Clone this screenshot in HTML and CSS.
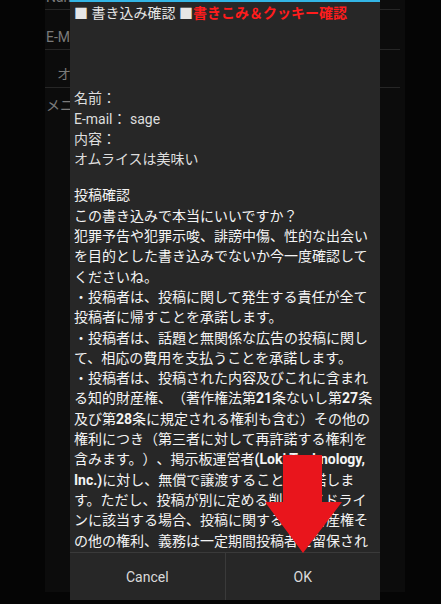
FILE: index.html
```html
<!DOCTYPE html>
<html lang="ja">
<head>
    <meta charset="UTF-8">
    <meta name="viewport" content="width=device-width, initial-scale=1.0">
    <title>書き込み確認</title>
    <link rel="stylesheet" href="styles.css">
</head>
<body>
    <div class="app">
        <div class="field field-name">Name</div>
        <div class="field field-mail">E-Mail</div>
        <div class="field field-input">オムライスは美味い</div>
        <div class="menu-label">メニュー</div>
    </div>

    <div class="dialog">
        <div class="dialog-body">
            <p class="title-line">■ 書き込み確認 ■<span class="warn">書きこみ＆クッキー確認</span></p>

            <div class="summary">
                <div>名前：</div>
                <div>E-mail： sage</div>
                <div>内容：</div>
                <div>オムライスは美味い</div>
            </div>

            <div class="notice">
                <div>投稿確認</div>
                <div>この書き込みで本当にいいですか？</div>
                <div>犯罪予告や犯罪示唆、誹謗中傷、性的な出会い</div>
                <div>を目的とした書き込みでないか今一度確認して</div>
                <div>くださいね。</div>
                <div>・投稿者は、投稿に関して発生する責任が全て</div>
                <div>投稿者に帰すことを承諾します。</div>
                <div>・投稿者は、話題と無関係な広告の投稿に関し</div>
                <div>て、相応の費用を支払うことを承諾します。</div>
                <div>・投稿者は、投稿された内容及びこれに含まれ</div>
                <div>る知的財産権、（著作権法第<b>21</b>条ないし第<b>27</b>条</div>
                <div>及び第<b>28</b>条に規定される権利も含む）その他の</div>
                <div>権利につき（第三者に対して再許諾する権利を</div>
                <div>含みます。）、掲示板運営者<b>(Loki Technology,</b></div>
                <div><b>Inc.)</b>に対し、無償で譲渡することを承諾しま</div>
                <div>す。ただし、投稿が別に定める削除ガイドライ</div>
                <div>ンに該当する場合、投稿に関する知的財産権そ</div>
                <div>の他の権利、義務は一定期間投稿者に留保され</div>
            </div>
        </div>

        <div class="dialog-buttons">
            <button class="dialog-btn">Cancel</button>
            <button class="dialog-btn">OK</button>
        </div>
    </div>

    <svg class="arrow" width="441" height="604" viewBox="0 0 441 604">
        <polygon points="283,455 322,455 322,502 342,502 303,553 265,502 283,502" fill="#e9151c"/>
    </svg>
</body>
</html>
```

FILE: styles.css
```css
* {
    margin: 0;
    padding: 0;
    box-sizing: border-box;
}

body {
    font-family: 'Roboto', 'Noto Sans CJK JP', sans-serif;
    font-size: 14px;
    background: #050505;
    width: 441px;
    height: 604px;
    overflow: hidden;
    position: relative;
    text-spacing-trim: space-all;
}

/* app behind the dialog */
.app {
    margin: 0 36px 0 45px;
    height: 604px;
    background: #0c0c0c;
    color: #7a7a7a;
}

.field {
    border-bottom: 1px solid #262626;
    margin-right: 5px;
    display: flex;
    align-items: flex-end;
    padding: 0 0 4px 1px;
}

.field-name {
    height: 22px;
    margin-top: -12px;
}

.field-mail {
    height: 40px;
}

.field-input {
    height: 38px;
    padding-left: 12px;
}

.menu-label {
    padding: 6px 0 0 1px;
}

/* dialog */
.dialog {
    position: absolute;
    left: 70px;
    top: 0;
    width: 310px;
    height: 600px;
    background: #272727;
    border-top: 2px solid #33b5e5;
    display: flex;
    flex-direction: column;
}

.dialog-body {
    flex: 1;
    overflow: hidden;
    padding: 1px 0 0 4px;
    line-height: 20.3px;
    white-space: nowrap;
}

.title-line {
    color: #e6e6e6;
}

.warn {
    color: #ff1c1c;
    font-weight: bold;
}

.summary {
    margin-top: 65px;
    color: #dedede;
}

.notice {
    margin-top: 16px;
    color: #f4f4f4;
}

.notice b {
    font-weight: bold;
}

.dialog-buttons {
    height: 48px;
    border-top: 1px solid #3a3a3a;
    display: flex;
}

.dialog-btn {
    flex: 1;
    background: none;
    border: none;
    color: #dadada;
    font-family: 'Roboto', 'Noto Sans CJK JP', sans-serif;
    font-size: 14px;
}

.dialog-btn + .dialog-btn {
    border-left: 1px solid #3a3a3a;
}

.arrow {
    position: absolute;
    left: 0;
    top: 0;
    pointer-events: none;
}
```
